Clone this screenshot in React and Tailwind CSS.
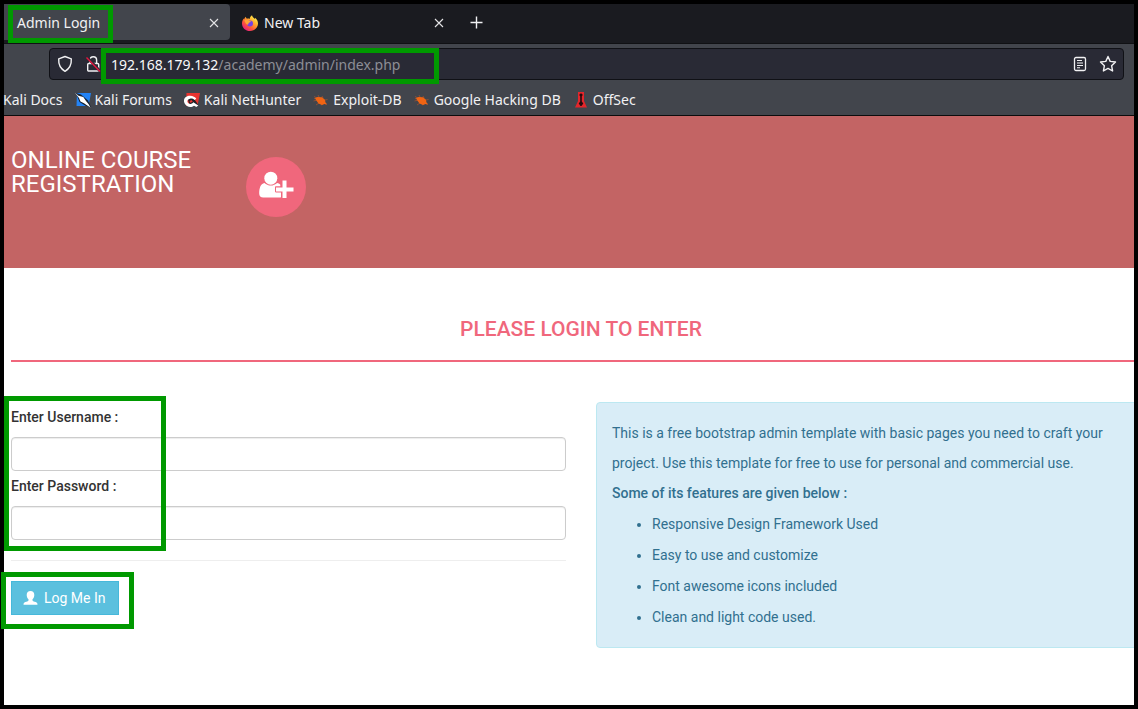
import React from "react";

function CloseIcon() {
  return (
    <svg width="10" height="10" viewBox="0 0 10 10" stroke="#e4e4e6" strokeWidth="1.1" aria-hidden="true">
      <path d="M1 1l8 8M9 1l-8 8" />
    </svg>
  );
}

function FirefoxIcon() {
  return (
    <svg width="16" height="16" viewBox="0 0 16 16" aria-hidden="true">
      <defs>
        <linearGradient id="fx" x1="0.85" y1="0.1" x2="0.15" y2="0.95">
          <stop offset="0" stopColor="#fff44f" />
          <stop offset="0.35" stopColor="#ffa62b" />
          <stop offset="0.65" stopColor="#ff5a36" />
          <stop offset="1" stopColor="#e31587" />
        </linearGradient>
      </defs>
      <path
        fill="url(#fx)"
        d="M10 .2c.2 1.600 1.600 2.400 2.700 3.600.3-.1.500-.3.400-1C14.900 4.200 16 6.300 16 8.500 16 12.700 12.500 16 8 16S0 12.700 0 8.400c0-1.900.7-3.700 1.700-4.900l.3 1C2.300 3.300 3 2.400 3.900 1.700c0 .9.400 1.500 1.100 2 .9-.2 1.900-.1 2.700.2C7.900 2.400 8.700 1 10 .2z"
      />
      <circle cx="8" cy="8.400" r="3" fill="#7542e5" />
      <path fill="#ffa436" d="M2.400 5.200c1.500-.8 3.500-.5 4.700.6l1.900.4c-.4 1-1.500 1-2.100 1.600-.6.700-.2 1.500-1 2C4 9.500 3 7.400 2.400 5.200z" />
    </svg>
  );
}

function ForumsIcon() {
  return (
    <svg width="16" height="16" viewBox="0 0 16 16" aria-hidden="true">
      <path fill="#2383f5" d="M2 1h14l-2.500 13H1.500z" />
      <path fill="#15202f" d="M1 1l5 1.500 7 6 3 6.500-5-1-6.500-4z" />
      <path fill="#fff" d="M0 .8l3.500 3L4.500 4l3.800 1L11 9l2.500 3 2 3.500L11.500 13 9 11.300 5.500 9.500 4 6z" />
    </svg>
  );
}

function NetHunterIcon() {
  return (
    <svg width="16" height="16" viewBox="0 0 16 16" aria-hidden="true">
      <path fill="#e8332f" d="M2.500 1H16l-2.500 13H2z" />
      <path fill="#1d1f25" d="M4 7.500C6 5.500 9 5.500 10.500 7.500l3.500 5-2 2-3-2H5.500z" />
      <path fill="#fff" d="M0 8.300C.3 5.300 3 3.800 6 3.800S11.200 5.200 12.300 6.800L10.500 8C9 6.500 7.500 6.200 5.800 6.700 3.500 7.400 3 9 3.800 10.500 4.800 12.500 8 12.300 9.300 10.300l5 3.200-2 1.500-2.300-1.200C8 15.500 5 15.500 3 14 1 12.500-.3 10.500 0 8.300z" />
      <path fill="#e8332f" d="M5.500 9L7.500 8l1.300 1.500-2.300 1.500z" />
    </svg>
  );
}

function BugIcon() {
  return (
    <svg width="16" height="16" viewBox="0 0 16 16" aria-hidden="true">
      <path stroke="#a9542f" strokeWidth="0.700" fill="none" d="M1 4.500l3 1.500M5 3l1.500 3M.5 9l4-1M3 13l3-2M9 4l1 2M12 8l2.500-.5M12 12l2 .5M8 13l2-1M1 6.500l3 .5" />
      <path fill="#f06413" d="M2 6L4.500 5 9 5.200l3 2.600.4 2.400 1.600 2.100-2.500-.4-2.500 1-3.500-1.400L3.200 8.300z" />
    </svg>
  );
}

function OffSecIcon() {
  return (
    <svg width="16" height="16" viewBox="0 0 16 16" aria-hidden="true">
      <path fill="#e3262b" d="M5 0h6v9l3 6.500H2L5 9z" />
      <path fill="#25090d" d="M8 1.500a1.500 1.500 0 0 1 .8 2.800V9.500l1.500 2L8.500 14h-1l-1.800-2.500 1.500-2V4.300A1.500 1.500 0 0 1 8 1.500z" />
    </svg>
  );
}

function ShieldIcon() {
  return (
    <svg width="16" height="18" viewBox="0 0 16 18" fill="none" stroke="#f1f1f3" strokeWidth="1.400" strokeLinejoin="round" aria-hidden="true">
      <path d="M8 1.500l6.300 2.300c.3 5-1.400 9.700-6.300 12.500C3.100 13.500 1.400 8.800 1.700 3.800z" />
    </svg>
  );
}

function InsecureLockIcon() {
  return (
    <svg width="16" height="18" viewBox="0 0 16 18" fill="none" aria-hidden="true">
      <g stroke="#f1f1f3" strokeWidth="1.400">
        <path d="M5 8.500V5a3.300 3.300 0 0 1 6.600 0v3.500" />
        <rect x="2.700" y="8.500" width="11" height="7.500" rx="1" />
      </g>
      <path d="M2.500 2.500l12 13" stroke="#292a35" strokeWidth="2.600" />
      <path d="M1.500 2.500l13.500 14" stroke="#e5173f" strokeWidth="1.400" />
    </svg>
  );
}

function ReaderIcon() {
  return (
    <svg width="14" height="16" viewBox="0 0 14 16" fill="none" stroke="#f1f1f3" strokeWidth="1.300" aria-hidden="true">
      <rect x="1.500" y="1.500" width="11" height="13" rx="1.500" />
      <path d="M4 4.500h5M4 7h6M4 9.500h6M4 11.800h3" strokeWidth="1.100" />
    </svg>
  );
}

function StarIcon() {
  return (
    <svg width="18" height="18" viewBox="0 0 18 18" fill="none" stroke="#f1f1f3" strokeWidth="1.400" strokeLinejoin="round" aria-hidden="true">
      <path d="M9 1.500l2.200 4.900 5.300.6-3.900 3.700 1 5.300L9 13.400 4.400 16l1-5.300L1.500 7l5.300-.6z" />
    </svg>
  );
}

function UserPlusIcon() {
  return (
    <svg width="36" height="28" viewBox="0 0 36 28" fill="#fff" aria-hidden="true">
      <circle cx="12.800" cy="7.200" r="6.500" />
      <path d="M6.500 12c1.500 1.500 4 2.600 6.300 2.600s4.800-1.100 6.300-2.600c1.200.1 2.300.6 3.200 1.700v1.600h-4.500a.8.800 0 0 0-.8.800v4.500c0 .5.3.8.800.8H23V26.300c-.4.200-1 .3-1.500.3H5.200C2.700 26.600 1.200 25 1.200 22.500c0-5 1.200-9.900 5.300-10.500z" />
      <path d="M24.500 9.500h4v7h7v4h-7v6.500h-4v-6.500h-6.500v-4h6.500z" />
    </svg>
  );
}

function PersonIcon() {
  return (
    <svg width="15" height="14" viewBox="0 0 15 14" fill="#fff" aria-hidden="true">
      <path d="M7.500 0c2.400 0 3.800 1.500 3.800 4 0 1.700-.7 3.300-1.800 4.200v1.200c.4.700 1.800 1.200 3.200 1.700 1.300.5 1.800 1.200 1.800 2.600H.5c0-1.400.5-2.100 1.800-2.600 1.400-.5 2.800-1 3.200-1.700V8.200C4.400 7.300 3.700 5.700 3.700 4c0-2.500 1.400-4 3.800-4z" />
    </svg>
  );
}

const bookmarks = [
  { label: "Kali Forums", icon: <ForumsIcon /> },
  { label: "Kali NetHunter", icon: <NetHunterIcon /> },
  { label: "Exploit-DB", icon: <BugIcon /> },
  { label: "Google Hacking DB", icon: <BugIcon /> },
  { label: "OffSec", icon: <OffSecIcon /> },
];

const features = [
  "Responsive Design Framework Used",
  "Easy to use and customize",
  "Font awesome icons included",
  "Clean and light code used.",
];

function Highlight({ className }) {
  return <span aria-hidden="true" className={`pointer-events-none absolute border-5 border-[#009900] ${className}`} />;
}

function BrowserChrome() {
  return (
    <div className="border-b border-[#0c0c0d] bg-[#42454c] font-['Noto_Sans',sans-serif] text-sm text-[#f1f1f3]">
      <div className="flex h-10 items-start border-b border-[#101114] bg-[#1a1b20]">
        <div className="relative flex h-9 w-[226px] items-center justify-between rounded-r bg-[#42454c] pt-px pr-[11px] pl-[13px]">
          <span>Admin Login</span>
          <button type="button" aria-label="Close Admin Login" className="flex"><CloseIcon /></button>
          <Highlight className="top-px left-1 h-[38px] w-[105px]" />
        </div>
        <div className="flex h-9 w-[226px] items-center pt-px pr-3 pl-3">
          <FirefoxIcon />
          <span className="ml-1.5 grow">New Tab</span>
          <button type="button" aria-label="Close New Tab" className="flex"><CloseIcon /></button>
        </div>
        <button type="button" aria-label="Open a new tab" className="flex h-9 items-center px-3.5 pt-px">
          <svg width="13" height="13" viewBox="0 0 13 13" stroke="#f1f1f3" strokeWidth="1.400" aria-hidden="true">
            <path d="M6.500 0.500v12M0.500 6.500h12" />
          </svg>
        </button>
      </div>
      <div className="pt-1 pr-2.5 pl-[45px]">
        <div className="relative flex h-8 items-center rounded border border-[#101116] bg-[#292a35] pr-1.5 pl-[7px]">
          <ShieldIcon />
          <span className="ml-3 flex"><InsecureLockIcon /></span>
          <div className="ml-2.5 grow pt-px text-[#8d8e96]">
            <span className="text-[#f9f9fb]">192.168.179.132</span>/academy/admin/index.php
          </div>
          <button type="button" aria-label="Reader view" className="mr-3 flex"><ReaderIcon /></button>
          <button type="button" aria-label="Bookmark this page" className="flex"><StarIcon /></button>
          <Highlight className="-top-px left-[51px] h-9 w-[338px]" />
        </div>
      </div>
      <nav className="flex h-[35px] items-center gap-3 pt-1">
        <a href="#docs" className="-ml-px">Kali Docs</a>
        {bookmarks.map((b) => (
          <a key={b.label} href="#bookmark" className="flex items-center gap-1">
            {b.icon}
            {b.label}
          </a>
        ))}
      </nav>
    </div>
  );
}

export default function App() {
  return (
    <div className="flex min-h-screen flex-col overflow-hidden bg-black p-1 font-['Roboto',sans-serif]">
      <BrowserChrome />
      <header className="flex h-[152px] items-start bg-[#c36464] pl-[7px] text-white">
        <h1 className="mt-8 w-[235px] pr-10 text-2xl leading-6">ONLINE COURSE REGISTRATION</h1>
        <div className="mt-[41px] flex size-[60px] items-center justify-center rounded-full bg-[#f0677c] pb-1">
          <UserPlusIcon />
        </div>
      </header>
      <div className="grow bg-white [clip-path:inset(0_0_0_-4px)]">
        <main className="-mr-[17px] pt-[50px] pl-[7px]">
          <h2 className="mb-10 border-b-2 border-[#f0677c] pb-5 text-center text-[21px] leading-[22px] font-medium text-[#f0677c]">
            PLEASE LOGIN TO ENTER
          </h2>
          <div className="grid grid-cols-2 gap-[30px] text-sm">
            <form className="relative" onSubmit={(e) => e.preventDefault()}>
              <label htmlFor="username" className="block h-[35px] leading-[30px] font-medium text-[#333]">Enter Username :</label>
              <input id="username" type="text" className="block h-[34px] w-full rounded border border-[#ccc] bg-white px-3 shadow-[inset_0_1px_1px_rgba(0,0,0,0.075)]" />
              <label htmlFor="password" className="block h-[35px] leading-[30px] font-medium text-[#333]">Enter Password :</label>
              <input id="password" type="password" className="block h-[34px] w-full rounded border border-[#ccc] bg-white px-3 shadow-[inset_0_1px_1px_rgba(0,0,0,0.075)]" />
              <hr className="my-5 border-[#eee]" />
              <Highlight className="-top-1.5 -left-[7px] h-[155px] w-[162px]" />
              <div className="relative w-max">
                <button type="submit" className="flex h-[34px] items-center gap-1.5 border border-[#46b8da] bg-[#5bc0de] pr-3 pl-[11px] text-white">
                  <PersonIcon />
                  Log Me In
                </button>
                <Highlight className="-top-[9px] -left-[10px] h-[57px] w-[133px]" />
              </div>
            </form>
            <section className="rounded border border-[#bce8f1] bg-[#d9edf7] p-[15px] pb-3.5 leading-[30px] text-[#31708f]">
              <p>This is a free bootstrap admin template with basic pages you need to craft your project. Use this template for free to use for personal and commercial use.</p>
              <p className="font-medium">Some of its features are given below :</p>
              <ul className="list-disc pt-px pl-10 leading-[31px]">
                {features.map((f) => (
                  <li key={f}>{f}</li>
                ))}
              </ul>
            </section>
          </div>
        </main>
      </div>
    </div>
  );
}
